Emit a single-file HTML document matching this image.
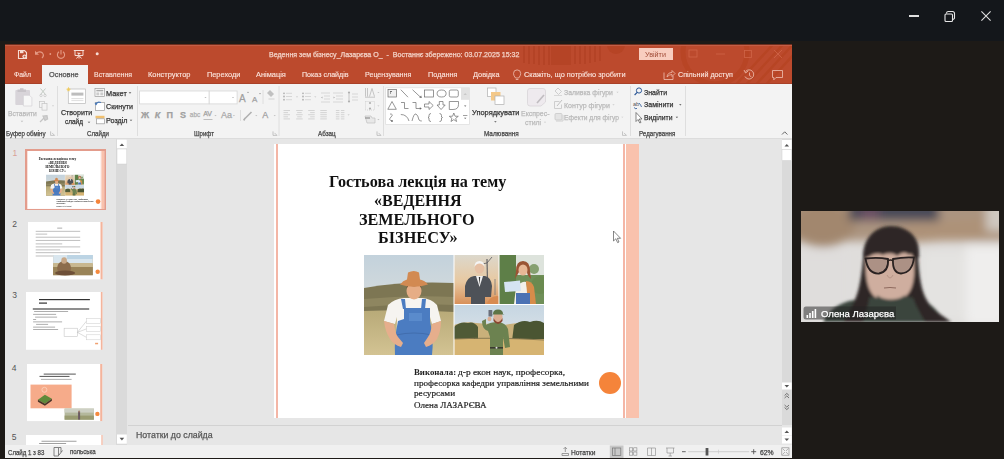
<!DOCTYPE html>
<html><head><meta charset="utf-8">
<style>
*{margin:0;padding:0;box-sizing:border-box}
html,body{width:1004px;height:459px;overflow:hidden;background:#1d1a17;font-family:"Liberation Sans",sans-serif;position:relative}
.a{position:absolute;white-space:nowrap;line-height:normal}
div.a{-webkit-text-stroke:0.25px currentColor}
svg.a{overflow:visible}
</style></head><body>
<div class="a" style="left:0;top:0;width:1004px;height:41px;background:#14171b"></div>
<div class="a" style="left:908.8px;top:15.3px;width:10px;height:1.4px;background:#e0e0e0"></div>
<svg class="a" style="left:943px;top:9.5px" width="13" height="13" viewBox="0 0 13 13"><rect x="2" y="4" width="7.5" height="7.5" rx="1" fill="none" stroke="#e6e6e6" stroke-width="1.1"/><path d="M3.5 3.5V3A1.8 1.8 0 0 1 5.3 1.5H9.7A1.8 1.8 0 0 1 11.5 3.3V7.7A1.8 1.8 0 0 1 9.7 9.5H9.5" fill="none" stroke="#e6e6e6" stroke-width="1.1"/></svg>
<svg class="a" style="left:981px;top:11px" width="10" height="10" viewBox="0 0 10 10"><path d="M0.4 0.4L9.6 9.6M9.6 0.4L0.4 9.6" stroke="#e0e0e0" stroke-width="1.1"/></svg>
<div class="a" style="left:5px;top:44px;width:787px;height:40px;background:#bc4a2d"></div>
<svg class="a" style="left:520px;top:44px;overflow:hidden" width="272" height="39" viewBox="0 0 272 39">
<g fill="none" stroke="#ad3e20" stroke-width="2" opacity="0.55">
<path d="M4 0V19M9 0V20M14 0V20M19 0V21M24 0V21M29 0V21M55 0V20M60 0V20M65 0V20M70 0V19M75 0V18M80 0V17"/>
</g>
<rect x="31" y="0" width="20" height="21" fill="#ad3e20" opacity="0.45"/>
<circle cx="96" cy="1" r="9" fill="#b0401f" opacity="0.55"/>
<circle cx="195" cy="8" r="32" fill="none" stroke="#b4421f" stroke-width="5" opacity="0.55"/>
<g stroke="#b4421f" stroke-width="2.5" opacity="0.6"><path d="M222 45L268 -5M232 45L278 -5M242 45L288 -5M212 45L258 -5"/></g>
</svg>
<div class="a" style="left:5px;top:83px;width:787px;height:1px;background:#a94129"></div>
<div class="a" style="left:5px;top:84px;width:787px;height:54px;background:#f3f3f3"></div>
<div class="a" style="left:5px;top:44px;width:787px;height:1px;background:#6e2e1e"></div>
<div class="a" style="left:5px;top:45px;width:787px;height:1px;background:#c45e45"></div>
<div class="a" style="left:5px;top:138px;width:787px;height:1px;background:#dcdcdc"></div>
<div class="a" style="left:5px;top:139px;width:787px;height:306px;background:#e6e6e6"></div>
<div class="a" style="left:42px;top:64.5px;width:45.5px;height:19.5px;background:#f3f3f3"></div>
<svg class="a" style="left:0;top:0" width="1004" height="459" viewBox="0 0 1004 459"><path d="M57.5 86V136" stroke="#dedede" stroke-width="1"/><path d="M137.5 86V136" stroke="#dedede" stroke-width="1"/><path d="M279 86V136" stroke="#dedede" stroke-width="1"/><path d="M383.5 86V136" stroke="#dedede" stroke-width="1"/><path d="M630.5 86V136" stroke="#dedede" stroke-width="1"/><path d="M685.5 86V136" stroke="#dedede" stroke-width="1"/><path d="M263 90V104" stroke="#dedede" stroke-width="1"/><path d="M240.5 110V121" stroke="#dedede" stroke-width="1"/><path d="M50.6 131.4V135.4H54.6 M52.1 132.9L54.6 135.4" stroke="#b0b0b0" stroke-width="0.7" fill="none"/><path d="M273 131.4V135.4H277 M274.5 132.9L277 135.4" stroke="#b0b0b0" stroke-width="0.7" fill="none"/><path d="M377 131.4V135.4H381 M378.5 132.9L381 135.4" stroke="#b0b0b0" stroke-width="0.7" fill="none"/><path d="M622.5 131.4V135.4H626.5 M624.0 132.9L626.5 135.4" stroke="#b0b0b0" stroke-width="0.7" fill="none"/><rect x="15.3" y="90.1" width="14.7" height="15" rx="1" fill="#d8d4d9"/><path d="M17.5 92 H26 V89.5 H23.5 V88.3 H20 V89.5 H17.5 Z" fill="#c8c4c9"/><path d="M23.4 95.3 H29.5 L31.9 97.7 V106 H23.4 Z" fill="#f7f7f7" stroke="#d0ccd1" stroke-width="0.6"/><path d="M20.7 120.85 L23.3 120.85 L22 122.15 Z" fill="#c0c0c0"/><path d="M40.5 88.5 L45.5 94.5 M45.5 88.5 L40.5 94.5" stroke="#b8c0b8" stroke-width="0.8"/><circle cx="41" cy="95.5" r="1.2" fill="none" stroke="#c4c4c4" stroke-width="0.7"/><circle cx="45" cy="95.5" r="1.2" fill="none" stroke="#c4c4c4" stroke-width="0.7"/><rect x="39.6" y="101.4" width="5" height="6" fill="none" stroke="#c4c4c4" stroke-width="0.7"/><rect x="42" y="103.6" width="5" height="6.5" fill="#f3f3f3" stroke="#c4c4c4" stroke-width="0.7"/><path d="M51.8 105.4 L54.2 105.4 L53 106.6 Z" fill="#c4c4c4"/><path d="M40 122 L44 118 M43 116 L47 115.6 L47.6 119 L45 120.5 Z" stroke="#c4c4c4" stroke-width="1.2" fill="#d0d0d0"/><rect x="68.3" y="89" width="17.3" height="14.5" fill="#fff" stroke="#b8b8b8" stroke-width="0.7"/><rect x="71.4" y="92.6" width="12" height="3" fill="#bdbdbd"/><path d="M71.4 98.6 H83.4 M71.4 100.6 H83.4" stroke="#d0d0d0" stroke-width="0.7"/><path d="M68.5 86.8 L69.3 88.5 L71 88.9 L69.5 89.9 L69.8 91.6 L68.5 90.7 L67.2 91.6 L67.5 89.9 L66 88.9 L67.7 88.5 Z" fill="#f2c94c" opacity="0.85"/><path d="M87.7 121.64999999999999 L90.3 121.64999999999999 L89 122.95 Z" fill="#555"/><rect x="95" y="88.5" width="9.5" height="8" fill="#fff" stroke="#9a9a9a" stroke-width="0.7"/><rect x="96.3" y="89.8" width="7" height="1.6" fill="#aaa"/><rect x="96.3" y="92.4" width="3" height="3" fill="#ccc"/><rect x="100.3" y="92.4" width="3" height="3" fill="#ccc"/><path d="M128.7 92.35 L131.3 92.35 L130 93.65 Z" fill="#555"/><rect x="95.5" y="102.5" width="9" height="8" fill="#fff" stroke="#9a9a9a" stroke-width="0.7"/><path d="M95.5 104.5 Q97 101 101 102.5" stroke="#4a7ab8" stroke-width="1.2" fill="none"/><path d="M94.5 102.8 L96 105.6 L97.6 103.2 Z" fill="#4a7ab8"/><rect x="95.5" y="115.8" width="9" height="2.6" fill="#f0c070"/><rect x="96.5" y="118.8" width="8" height="5" fill="#fff" stroke="#9a9a9a" stroke-width="0.7"/><path d="M129.7 119.75 L132.3 119.75 L131 121.05000000000001 Z" fill="#555"/><rect x="139.6" y="91" width="69.6" height="12.9" fill="#fff" stroke="#d6d6d6" stroke-width="0.8"/><rect x="209.2" y="91" width="27.9" height="12.9" fill="#fff" stroke="#d6d6d6" stroke-width="0.8"/><path d="M204.4 96.95 L206.6 96.95 L205.5 98.05 Z" fill="#b0b0b0"/><path d="M231.9 96.95 L234.1 96.95 L233 98.05 Z" fill="#b0b0b0"/></svg>
<svg class="a" style="left:0;top:0" width="1004" height="459" viewBox="0 0 1004 459"><path d="M247 93 l1 -1.5 l1 1.5 Z M259 93 l1 1.5 l1 -1.5 Z" fill="#a0a0a0"/><path d="M270 90 l4 4 l-3 3 l-4 -4 Z" fill="#c0c0c0"/><path d="M268.5 99 h6" stroke="#c8c8c8" stroke-width="0.8"/><path d="M203.5 119.5 h9" stroke="#b0b0b0" stroke-width="0.8"/><path d="M214.4 115.05 L216.6 115.05 L215.5 116.14999999999999 Z" fill="#c0c0c0"/><path d="M232.8 115.05 L235.0 115.05 L233.9 116.14999999999999 Z" fill="#c0c0c0"/><path d="M255.20000000000002 115.05 L257.40000000000003 115.05 L256.3 116.14999999999999 Z" fill="#c0c0c0"/><path d="M273.59999999999997 115.05 L275.8 115.05 L274.7 116.14999999999999 Z" fill="#c0c0c0"/><path d="M243.5 120 L251.5 112 M245 118 l-1 2.5" stroke="#b0b0b0" stroke-width="1.6"/><circle cx="284" cy="93.3" r="0.9" fill="#b0b0b0"/><path d="M286 93.3H292" stroke="#cfcfcf" stroke-width="0.8"/><circle cx="284" cy="96.5" r="0.9" fill="#b0b0b0"/><path d="M286 96.5H292" stroke="#cfcfcf" stroke-width="0.8"/><circle cx="284" cy="99.7" r="0.9" fill="#b0b0b0"/><path d="M286 99.7H292" stroke="#cfcfcf" stroke-width="0.8"/><path d="M295.9 96.45 L298.1 96.45 L297 97.55 Z" fill="#c0c0c0"/><circle cx="303" cy="93.3" r="0.9" fill="#b0b0b0"/><path d="M305 93.3H311" stroke="#cfcfcf" stroke-width="0.8"/><circle cx="303" cy="96.5" r="0.9" fill="#b0b0b0"/><path d="M305 96.5H311" stroke="#cfcfcf" stroke-width="0.8"/><circle cx="303" cy="99.7" r="0.9" fill="#b0b0b0"/><path d="M305 99.7H311" stroke="#cfcfcf" stroke-width="0.8"/><path d="M314.2 96.45 L316.40000000000003 96.45 L315.3 97.55 Z" fill="#c0c0c0"/><path d="M321 93h9M324 96h6M324 99h6M321 102h9" stroke="#cfcfcf" stroke-width="0.8"/><path d="M322.5 96.5 l-1.5 1 l1.5 1z" fill="#b0b0b0"/><path d="M333 93h10M336 96h7M336 99h7M333 102h10" stroke="#cfcfcf" stroke-width="0.8"/><path d="M333.5 96.5 l1.5 1 l-1.5 1z" fill="#b0b0b0"/><path d="M349 92v10" stroke="#b8b8b8" stroke-width="0.8"/><circle cx="349" cy="92.5" r="1.1" fill="#b0b0b0"/><circle cx="349" cy="101.5" r="1.1" fill="#b0b0b0"/><path d="M352 94h6M352 97h6M352 100h6" stroke="#cfcfcf" stroke-width="0.8"/><path d="M283.5 110.5h6.5" stroke="#cbcbcb" stroke-width="0.8"/><path d="M283.5 112.6h4.5" stroke="#cbcbcb" stroke-width="0.8"/><path d="M283.5 114.7h6.5" stroke="#cbcbcb" stroke-width="0.8"/><path d="M283.5 116.8h4.5" stroke="#cbcbcb" stroke-width="0.8"/><path d="M283.5 118.9h6.5" stroke="#cbcbcb" stroke-width="0.8"/><path d="M296.2 110.5h6.5" stroke="#cbcbcb" stroke-width="0.8"/><path d="M297.2 112.6h4.5" stroke="#cbcbcb" stroke-width="0.8"/><path d="M296.2 114.7h6.5" stroke="#cbcbcb" stroke-width="0.8"/><path d="M297.2 116.8h4.5" stroke="#cbcbcb" stroke-width="0.8"/><path d="M296.2 118.9h6.5" stroke="#cbcbcb" stroke-width="0.8"/><path d="M308.2 110.5h6.5" stroke="#cbcbcb" stroke-width="0.8"/><path d="M310.2 112.6h4.5" stroke="#cbcbcb" stroke-width="0.8"/><path d="M308.2 114.7h6.5" stroke="#cbcbcb" stroke-width="0.8"/><path d="M310.2 116.8h4.5" stroke="#cbcbcb" stroke-width="0.8"/><path d="M308.2 118.9h6.5" stroke="#cbcbcb" stroke-width="0.8"/><path d="M320.3 110.5h6.5" stroke="#cbcbcb" stroke-width="0.8"/><path d="M320.3 112.6h6.5" stroke="#cbcbcb" stroke-width="0.8"/><path d="M320.3 114.7h6.5" stroke="#cbcbcb" stroke-width="0.8"/><path d="M320.3 116.8h6.5" stroke="#cbcbcb" stroke-width="0.8"/><path d="M320.3 118.9h6.5" stroke="#cbcbcb" stroke-width="0.8"/><path d="M335.9 110.5h3.5M340.9 110.5h3.5" stroke="#cbcbcb" stroke-width="0.8"/><path d="M335.9 112.6h3.5M340.9 112.6h3.5" stroke="#cbcbcb" stroke-width="0.8"/><path d="M335.9 114.7h3.5M340.9 114.7h3.5" stroke="#cbcbcb" stroke-width="0.8"/><path d="M335.9 116.8h3.5M340.9 116.8h3.5" stroke="#cbcbcb" stroke-width="0.8"/><path d="M335.9 118.9h3.5M340.9 118.9h3.5" stroke="#cbcbcb" stroke-width="0.8"/><path d="M347.5 114.45 L349.70000000000005 114.45 L348.6 115.55 Z" fill="#c0c0c0"/><path d="M365.5 88v8.5M367.5 88v8.5M369.5 96.5 l2.5 -8 l2.5 8M365 97.2h10" stroke="#b0b0b0" stroke-width="0.7" fill="none"/><rect x="365.5" y="101.5" width="9" height="8.5" fill="none" stroke="#c0c0c0" stroke-width="0.6" stroke-dasharray="1 1"/><circle cx="370" cy="103" r="1.1" fill="#b0b0b0"/><circle cx="370" cy="108.6" r="1.1" fill="#b0b0b0"/><path d="M365 116h6l1 2h3v5h-8z" fill="#e8e8e8" stroke="#b8b8b8" stroke-width="0.6"/><path d="M365 118h5" stroke="#a0a0a0" stroke-width="1.5"/><path d="M377.29999999999995 91.95 L379.5 91.95 L378.4 93.05 Z" fill="#c0c0c0"/><path d="M377.29999999999995 105.45 L379.5 105.45 L378.4 106.55 Z" fill="#c0c0c0"/><path d="M377.29999999999995 119.05 L379.5 119.05 L378.4 120.14999999999999 Z" fill="#c0c0c0"/><rect x="385.7" y="87.8" width="83.8" height="36.8" fill="#fff" stroke="#dcdcdc" stroke-width="0.7"/><rect x="461" y="87.8" width="8.5" height="12" fill="#e2e2e2"/><path d="M463.5 95 l1.7 -2 l1.7 2z" fill="#c8c8c8"/><path d="M464.0 105.60000000000001 L466.4 105.60000000000001 L465.2 106.8 Z" fill="#606060"/><path d="M463 115.5h4.4" stroke="#606060" stroke-width="0.6"/><path d="M464.0 117.7 L466.4 117.7 L465.2 118.89999999999999 Z" fill="#606060"/><rect x="388" y="89.5" width="8.5" height="7.5" fill="#f0f0f0" stroke="#6a6a6a" stroke-width="0.7"/><path d="M390 91.5h2" stroke="#6a6a6a" stroke-width="0.9"/><path d="M390.5 91v3" stroke="#6a6a6a" stroke-width="0.6"/><path d="M400.8 89.7 L408 97.2" stroke="#6a6a6a" stroke-width="0.7"/><path d="M412.5 89.7 L420.5 97.2" stroke="#6a6a6a" stroke-width="0.7"/><path d="M421.8 98 l-2.6 -0.4 l2 -2z" fill="#6a6a6a"/><rect x="424.5" y="90" width="9" height="7" fill="none" stroke="#6a6a6a" stroke-width="0.7"/><ellipse cx="441.6" cy="93.5" rx="4.5" ry="3.5" fill="none" stroke="#6a6a6a" stroke-width="0.7"/><rect x="449.3" y="90" width="9" height="7" rx="1.5" fill="none" stroke="#6a6a6a" stroke-width="0.7"/><path d="M392 101.5 L396.3 109.3 H387.8 Z" fill="none" stroke="#6a6a6a" stroke-width="0.7"/><path d="M401 102.5 H404.5 V108.5 H408.5" fill="none" stroke="#6a6a6a" stroke-width="0.7"/><path d="M412.5 102.5 H416 V108.5 H420" fill="none" stroke="#6a6a6a" stroke-width="0.7"/><path d="M421.8 108.5 l-2 -1.3 v2.6z" fill="#6a6a6a"/><path d="M424.5 104 H429 V101.5 L433.2 105.5 L429 109.5 V107 H424.5 Z" fill="none" stroke="#6a6a6a" stroke-width="0.7"/><path d="M439.3 101.5 H443 V105 H445.2 L441.1 109.5 L437 105 H439.3 Z" fill="none" stroke="#6a6a6a" stroke-width="0.7"/><path d="M449.3 109.5 V101.5 H458.5 V104.5 Q458.5 109.5 453 109.5 Z" fill="none" stroke="#6a6a6a" stroke-width="0.7"/><path d="M390 114 Q394 114 391 117 Q388 120 392 121" fill="none" stroke="#6a6a6a" stroke-width="0.7"/><circle cx="392" cy="121" r="0.9" fill="#6a6a6a"/><path d="M400.8 114.5 Q407 114.5 409 121" fill="none" stroke="#6a6a6a" stroke-width="0.7"/><path d="M412 121 Q414 113 416 114 Q418 115 419 120 Q420 121 421.8 121" fill="none" stroke="#6a6a6a" stroke-width="0.7"/><path d="M431 113.5 Q429 113.5 429 115.5 V117 L428 117.5 L429 118 V120 Q429 121.5 431 121.5" fill="none" stroke="#6a6a6a" stroke-width="0.7"/><path d="M439.5 113.5 Q441.5 113.5 441.5 115.5 V117 L442.5 117.5 L441.5 118 V120 Q441.5 121.5 439.5 121.5" fill="none" stroke="#6a6a6a" stroke-width="0.7"/><path d="M453.8 113 L455 116.2 L458.3 116.3 L455.7 118.3 L456.6 121.5 L453.8 119.6 L451 121.5 L451.9 118.3 L449.3 116.3 L452.6 116.2 Z" fill="none" stroke="#6a6a6a" stroke-width="0.7"/><rect x="487.5" y="88" width="8.5" height="8.5" fill="#fff" stroke="#b0b0b0" stroke-width="0.7"/><rect x="491" y="92" width="9.5" height="8.5" fill="#f4c98a"/><rect x="495" y="96" width="9" height="8.5" fill="#fff" stroke="#b0b0b0" stroke-width="0.7"/><path d="M494.09999999999997 121.14999999999999 L496.7 121.14999999999999 L495.4 122.45 Z" fill="#555"/><path d="M527.5 91 Q527.5 88.5 530 88.5 H543 Q545.5 88.5 545.5 91 V102 L541 106 H530 Q527.5 106 527.5 103.5 Z" fill="#eeeaee" stroke="#d8d4d8" stroke-width="0.8"/><path d="M537 103 L544 95" stroke="#c0bcc0" stroke-width="1.6"/><path d="M543.9 121.85000000000001 L546.1 121.85000000000001 L545 122.95 Z" fill="#c8c8c8"/><path d="M555 91 l3 -3 l3.5 3.5 l-3 3 z" fill="none" stroke="#c4c4c4" stroke-width="0.8"/><path d="M554 95.5h8" stroke="#d8d8d8" stroke-width="1"/><path d="M554.5 101.5 h5 M554.5 101.5 v7 h7 v-4" fill="none" stroke="#c4c4c4" stroke-width="0.8"/><path d="M557 106 L562 100" stroke="#c0c0c0" stroke-width="1"/><rect x="555" y="113.5" width="7" height="6.5" rx="1" fill="#e4e4e4" stroke="#c4c4c4" stroke-width="0.7"/><path d="M556 121 h7 v-6" stroke="#d0d0d0" stroke-width="1" fill="none"/><path d="M616.4 91.85000000000001 L618.6 91.85000000000001 L617.5 92.95 Z" fill="#cccccc"/><path d="M612.4 104.35000000000001 L614.6 104.35000000000001 L613.5 105.45 Z" fill="#cccccc"/><path d="M621.1999999999999 116.75 L623.4 116.75 L622.3 117.85 Z" fill="#cccccc"/><circle cx="639" cy="90.5" r="2.6" fill="none" stroke="#2b5797" stroke-width="1"/><path d="M637.2 92.4 L634.6 95" stroke="#2b5797" stroke-width="1.2"/><text x="633" y="105.5" font-size="5.5" font-family="Liberation Sans" fill="#555">ab</text><path d="M634 107.5 l2 1.5 l1 -1 M639 103 q2 2 2.5 4" stroke="#2b5797" stroke-width="0.8" fill="none"/><path d="M636 112.5 V121.5 L638 119.5 L639.8 123 L641 122.4 L639.3 119 L642 119 Z" fill="#fff" stroke="#555" stroke-width="0.7"/><path d="M679.0999999999999 104.30000000000001 L681.5 104.30000000000001 L680.3 105.5 Z" fill="#444"/><path d="M675.6999999999999 116.7 L678.1 116.7 L676.9 117.89999999999999 Z" fill="#444"/><path d="M782 134.5 L784.7 131.8 L787.4 134.5" stroke="#555" stroke-width="0.9" fill="none"/></svg>
<svg class="a" style="left:0;top:0" width="1004" height="459" viewBox="0 0 1004 459"><path d="M18.5 50.5 H24.5 L26.5 52.5 V58.5 H18.5 Z" fill="none" stroke="#f6dcd3" stroke-width="1.1"/><rect x="20" y="51" width="3.5" height="2.2" fill="#f6dcd3"/><circle cx="24.6" cy="56.6" r="2.2" fill="#f6dcd3"/><path d="M23.6 56.6 h2 M24.6 55.6 v2" stroke="#ba4a2e" stroke-width="0.7"/><path d="M36 53.5 Q39.5 50.5 42.5 53 Q44.5 55.5 42 58" fill="none" stroke="#e59a84" stroke-width="1.2"/><path d="M35 50.8 V54.8 H39 Z" fill="#e59a84"/><circle cx="50.3" cy="54" r="0.9" fill="#e59a84"/><path d="M59 51.8 A3.6 3.6 0 1 0 63 51.8" fill="none" stroke="#e59a84" stroke-width="1.1"/><path d="M61 50 V54.5" stroke="#e59a84" stroke-width="1.1"/><path d="M73.8 50.5 H84.2 M75 50.5 V55.5 H83 V50.5 M79 55.5 V58.5 M76.5 58.5 L79 55.5 L81.5 58.5" fill="none" stroke="#f6dcd3" stroke-width="1"/><path d="M77 52.5 L81 53 L78.5 55" fill="#f6dcd3"/><circle cx="97.2" cy="53.8" r="1.5" fill="#f6dcd3"/><path d="M716 54 h9" stroke="#cf6448" stroke-width="0.8"/><rect x="744.5" y="50.5" width="7" height="7" fill="none" stroke="#cf6448" stroke-width="0.8"/><path d="M774 50 L782 58 M782 50 L774 58" stroke="#cf6448" stroke-width="0.8"/><rect x="689" y="50" width="8" height="7" fill="none" stroke="#cf6448" stroke-width="0.8"/><path d="M515.5 78 Q513.5 75.5 513.5 73.5 A3.6 3.6 0 0 1 520.7 73.5 Q520.7 75.5 518.7 78 Z" fill="none" stroke="#f0c2b4" stroke-width="0.8"/><path d="M515.8 79.5 h2.6" stroke="#f0c2b4" stroke-width="0.8"/><path d="M664 72.5 V79.5 H673 V76" fill="none" stroke="#f0c2b4" stroke-width="0.8"/><path d="M667 77 Q667.5 72.5 672 72.5 V70.5 L675 73.5 L672 76.5 V74.5 Q669 74.5 667 77 Z" fill="none" stroke="#f0c2b4" stroke-width="0.75"/><path d="M745.6 71.5 A4.6 4.6 0 1 1 745 76.5" fill="none" stroke="#f0c2b4" stroke-width="0.8"/><path d="M744 70 L745.6 73 L748.2 71" fill="none" stroke="#f0c2b4" stroke-width="0.8"/><path d="M749.5 72.5 V75.5 L751.5 77" fill="none" stroke="#f0c2b4" stroke-width="0.8"/><path d="M772.5 70.5 H782.5 V77.5 H776 L773.8 79.8 V77.5 H772.5 Z" fill="none" stroke="#f0c2b4" stroke-width="0.8"/></svg>
<div class="a" style="left:239px;top:93.5px;font-size:10px;font-weight:400;color:#a0a0a0;line-height:1;">A</div>
<div class="a" style="left:252px;top:95.5px;font-size:8px;font-weight:400;color:#a0a0a0;line-height:1;">A</div>
<div class="a" style="left:141px;top:110.5px;font-size:9px;font-weight:700;color:#a0a0a0;line-height:1;">Ж</div>
<div class="a" style="left:154.7px;top:110.5px;font-size:9px;font-weight:700;color:#a0a0a0;line-height:1;font-style:italic">К</div>
<div class="a" style="left:166.6px;top:110.5px;font-size:9px;font-weight:700;color:#a0a0a0;line-height:1;">П</div>
<div class="a" style="left:180px;top:110.5px;font-size:9px;font-weight:700;color:#a0a0a0;line-height:1;">S</div>
<div class="a" style="left:189.8px;top:112.3px;font-size:6.5px;font-weight:400;color:#b0b0b0;line-height:1;">abc</div>
<div class="a" style="left:203.2px;top:110.3px;font-size:7px;font-weight:400;color:#a0a0a0;line-height:1;">AV</div>
<div class="a" style="left:220.9px;top:110.5px;font-size:9px;font-weight:400;color:#a8a8a8;line-height:1;">Aa</div>
<div class="a" style="left:262.3px;top:110.5px;font-size:9px;font-weight:400;color:#a0a0a0;line-height:1;">A</div>
<div class="a" style="left:269.00px;top:50.02px;font-family:'Liberation Sans',sans-serif;font-size:7.8px;font-weight:400;color:#f3d3c8;transform:scaleX(0.9040);transform-origin:0 0;white-space:pre">Ведення зем бізнесу_Лазарєва О_  -  Востаннє збережено: 03.07.2025 15:32</div>
<div class="a" style="left:639px;top:48px;width:34px;height:12px;background:#f8cdbf"></div>
<div class="a" style="left:645.20px;top:49.72px;font-family:'Liberation Sans',sans-serif;font-size:7.8px;font-weight:400;color:#a04a36;transform:scaleX(0.9218);transform-origin:0 0;-webkit-text-stroke:0">Увійти</div>
<div class="a" style="left:14.40px;top:70.23px;font-family:'Liberation Sans',sans-serif;font-size:7.6px;font-weight:400;color:#fbe5de;transform:scaleX(0.9105);transform-origin:0 0;-webkit-text-stroke:0.12px currentColor">Файл</div>
<div class="a" style="left:94.30px;top:70.23px;font-family:'Liberation Sans',sans-serif;font-size:7.6px;font-weight:400;color:#fbe5de;transform:scaleX(0.9157);transform-origin:0 0;-webkit-text-stroke:0.12px currentColor">Вставлення</div>
<div class="a" style="left:148.00px;top:70.23px;font-family:'Liberation Sans',sans-serif;font-size:7.6px;font-weight:400;color:#fbe5de;transform:scaleX(0.9812);transform-origin:0 0;-webkit-text-stroke:0.12px currentColor">Конструктор</div>
<div class="a" style="left:206.70px;top:70.23px;font-family:'Liberation Sans',sans-serif;font-size:7.6px;font-weight:400;color:#fbe5de;transform:scaleX(0.9678);transform-origin:0 0;-webkit-text-stroke:0.12px currentColor">Переходи</div>
<div class="a" style="left:255.70px;top:70.23px;font-family:'Liberation Sans',sans-serif;font-size:7.6px;font-weight:400;color:#fbe5de;transform:scaleX(0.9788);transform-origin:0 0;-webkit-text-stroke:0.12px currentColor">Анімація</div>
<div class="a" style="left:301.70px;top:70.23px;font-family:'Liberation Sans',sans-serif;font-size:7.6px;font-weight:400;color:#fbe5de;transform:scaleX(0.9367);transform-origin:0 0;-webkit-text-stroke:0.12px currentColor">Показ слайдів</div>
<div class="a" style="left:364.50px;top:70.23px;font-family:'Liberation Sans',sans-serif;font-size:7.6px;font-weight:400;color:#fbe5de;transform:scaleX(0.9354);transform-origin:0 0;-webkit-text-stroke:0.12px currentColor">Рецензування</div>
<div class="a" style="left:427.50px;top:70.23px;font-family:'Liberation Sans',sans-serif;font-size:7.6px;font-weight:400;color:#fbe5de;transform:scaleX(0.9618);transform-origin:0 0;-webkit-text-stroke:0.12px currentColor">Подання</div>
<div class="a" style="left:473.00px;top:70.23px;font-family:'Liberation Sans',sans-serif;font-size:7.6px;font-weight:400;color:#fbe5de;transform:scaleX(0.9697);transform-origin:0 0;-webkit-text-stroke:0.12px currentColor">Довідка</div>
<div class="a" style="left:523.70px;top:70.23px;font-family:'Liberation Sans',sans-serif;font-size:7.6px;font-weight:400;color:#fbe5de;transform:scaleX(0.9695);transform-origin:0 0;-webkit-text-stroke:0.12px currentColor">Скажіть, що потрібно зробити</div>
<div class="a" style="left:678.40px;top:70.23px;font-family:'Liberation Sans',sans-serif;font-size:7.6px;font-weight:400;color:#fbe5de;transform:scaleX(0.9402);transform-origin:0 0;-webkit-text-stroke:0.12px currentColor">Спільний доступ</div>
<div class="a" style="left:49.40px;top:70.23px;font-family:'Liberation Sans',sans-serif;font-size:7.6px;font-weight:400;color:#505050;transform:scaleX(0.9680);transform-origin:0 0;">Основне</div>
<div class="a" style="left:6.20px;top:129.26px;font-family:'Liberation Sans',sans-serif;font-size:7.2px;font-weight:400;color:#444;transform:scaleX(0.8600);transform-origin:0 0;">Буфер обміну</div>
<div class="a" style="left:87.10px;top:129.26px;font-family:'Liberation Sans',sans-serif;font-size:7.2px;font-weight:400;color:#444;transform:scaleX(0.8552);transform-origin:0 0;">Слайди</div>
<div class="a" style="left:194.00px;top:129.26px;font-family:'Liberation Sans',sans-serif;font-size:7.2px;font-weight:400;color:#444;transform:scaleX(0.8454);transform-origin:0 0;">Шрифт</div>
<div class="a" style="left:318.20px;top:129.26px;font-family:'Liberation Sans',sans-serif;font-size:7.2px;font-weight:400;color:#444;transform:scaleX(0.8775);transform-origin:0 0;">Абзац</div>
<div class="a" style="left:484.10px;top:129.26px;font-family:'Liberation Sans',sans-serif;font-size:7.2px;font-weight:400;color:#444;transform:scaleX(0.8848);transform-origin:0 0;">Малювання</div>
<div class="a" style="left:639.40px;top:129.26px;font-family:'Liberation Sans',sans-serif;font-size:7.2px;font-weight:400;color:#444;transform:scaleX(0.8582);transform-origin:0 0;">Редагування</div>
<div class="a" style="left:7.70px;top:108.93px;font-family:'Liberation Sans',sans-serif;font-size:7.6px;font-weight:400;color:#b9b9b9;transform:scaleX(0.8866);transform-origin:0 0;">Вставити</div>
<div class="a" style="left:60.90px;top:108.11px;font-family:'Liberation Sans',sans-serif;font-size:7.8px;font-weight:400;color:#333;transform:scaleX(0.9089);transform-origin:0 0;">Створити</div>
<div class="a" style="left:65.00px;top:117.17px;font-family:'Liberation Sans',sans-serif;font-size:7.8px;font-weight:400;color:#333;transform:scaleX(0.8294);transform-origin:0 0;">слайд</div>
<div class="a" style="left:106.00px;top:88.52px;font-family:'Liberation Sans',sans-serif;font-size:7.8px;font-weight:400;color:#333;transform:scaleX(0.9421);transform-origin:0 0;">Макет</div>
<div class="a" style="left:106.00px;top:101.72px;font-family:'Liberation Sans',sans-serif;font-size:7.8px;font-weight:400;color:#333;transform:scaleX(0.9143);transform-origin:0 0;">Скинути</div>
<div class="a" style="left:106.00px;top:115.92px;font-family:'Liberation Sans',sans-serif;font-size:7.8px;font-weight:400;color:#333;transform:scaleX(0.9210);transform-origin:0 0;">Розділ</div>
<div class="a" style="left:472.00px;top:108.42px;font-family:'Liberation Sans',sans-serif;font-size:7.8px;font-weight:400;color:#333;transform:scaleX(0.9551);transform-origin:0 0;">Упорядкувати</div>
<div class="a" style="left:520.90px;top:108.53px;font-family:'Liberation Sans',sans-serif;font-size:7.6px;font-weight:400;color:#b9b9b9;transform:scaleX(0.9147);transform-origin:0 0;">Експрес-</div>
<div class="a" style="left:524.90px;top:117.50px;font-family:'Liberation Sans',sans-serif;font-size:7.6px;font-weight:400;color:#b9b9b9;transform:scaleX(0.9127);transform-origin:0 0;">стилі</div>
<div class="a" style="left:564.10px;top:88.03px;font-family:'Liberation Sans',sans-serif;font-size:7.6px;font-weight:400;color:#b9b9b9;transform:scaleX(0.9016);transform-origin:0 0;">Заливка фігури</div>
<div class="a" style="left:564.10px;top:100.53px;font-family:'Liberation Sans',sans-serif;font-size:7.6px;font-weight:400;color:#b9b9b9;transform:scaleX(0.9302);transform-origin:0 0;">Контур фігури</div>
<div class="a" style="left:564.10px;top:112.93px;font-family:'Liberation Sans',sans-serif;font-size:7.6px;font-weight:400;color:#b9b9b9;transform:scaleX(0.8784);transform-origin:0 0;">Ефекти для фігур</div>
<div class="a" style="left:643.80px;top:87.92px;font-family:'Liberation Sans',sans-serif;font-size:7.8px;font-weight:400;color:#333;transform:scaleX(0.9009);transform-origin:0 0;">Знайти</div>
<div class="a" style="left:643.80px;top:100.42px;font-family:'Liberation Sans',sans-serif;font-size:7.8px;font-weight:400;color:#333;transform:scaleX(0.9012);transform-origin:0 0;">Замінити</div>
<div class="a" style="left:643.80px;top:112.81px;font-family:'Liberation Sans',sans-serif;font-size:7.8px;font-weight:400;color:#333;transform:scaleX(0.8723);transform-origin:0 0;">Виділити</div>
<div class="a" style="left:116px;top:139px;width:11px;height:306px;background:#dadada"></div>
<div class="a" style="left:782px;top:139px;width:10px;height:286px;background:#dadada"></div>
<div class="a" style="left:274px;top:144px;width:365px;height:274px"><div class="a" style="left:0;top:0;width:365px;height:274px;background:#fff"></div>
<div class="a" style="left:1.5px;top:0;width:2.5px;height:274px;background:#f4b6a6"></div>
<div class="a" style="left:348.5px;top:0;width:2px;height:274px;background:#f4b6a6"></div>
<div class="a" style="left:352px;top:0;width:13px;height:274px;background:#f9c2ad"></div>
<div class="a" style="left:55.00px;top:29.04px;font-family:'Liberation Serif',serif;font-size:16px;font-weight:700;-webkit-text-stroke:0;color:#111;transform:scaleX(1.0123);transform-origin:0 0;">Гостьова лекція на тему</div>
<div class="a" style="left:99.80px;top:47.54px;font-family:'Liberation Serif',serif;font-size:16px;font-weight:700;-webkit-text-stroke:0;color:#111;transform:scaleX(1.0015);transform-origin:0 0;">«ВЕДЕННЯ</div>
<div class="a" style="left:84.80px;top:66.54px;font-family:'Liberation Serif',serif;font-size:16px;font-weight:700;-webkit-text-stroke:0;color:#111;transform:scaleX(1.0114);transform-origin:0 0;">ЗЕМЕЛЬНОГО</div>
<div class="a" style="left:103.80px;top:85.44px;font-family:'Liberation Serif',serif;font-size:16px;font-weight:700;-webkit-text-stroke:0;color:#111;transform:scaleX(1.0159);transform-origin:0 0;">БІЗНЕСУ»</div>
<div class="a" style="left:139.90px;top:222.69px;font-family:'Liberation Serif',serif;font-size:9.1px;font-weight:700;-webkit-text-stroke:0;color:#222;transform:scaleX(0.9675);transform-origin:0 0;">Виконала:</div>
<div class="a" style="left:184.00px;top:222.69px;font-family:'Liberation Serif',serif;font-size:9.1px;font-weight:400;-webkit-text-stroke:0;color:#222;transform:scaleX(1.0293);transform-origin:0 0;-webkit-text-stroke:0.2px #222">д-р екон наук, професорка,</div>
<div class="a" style="left:139.90px;top:234.49px;font-family:'Liberation Serif',serif;font-size:9.1px;font-weight:400;-webkit-text-stroke:0;color:#222;transform:scaleX(1.0048);transform-origin:0 0;-webkit-text-stroke:0.2px #222">професорка кафедри управління земельними</div>
<div class="a" style="left:139.90px;top:244.09px;font-family:'Liberation Serif',serif;font-size:9.1px;font-weight:400;-webkit-text-stroke:0;color:#222;transform:scaleX(1.0117);transform-origin:0 0;-webkit-text-stroke:0.2px #222">ресурсами</div>
<div class="a" style="left:139.90px;top:255.69px;font-family:'Liberation Serif',serif;font-size:9.1px;font-weight:400;-webkit-text-stroke:0;color:#222;transform:scaleX(0.9935);transform-origin:0 0;-webkit-text-stroke:0.2px #222">Олена ЛАЗАРЄВА</div>
<svg class="a" style="left:90px;top:111px;overflow:hidden" width="180" height="100" viewBox="0 0 180 100">
<defs>
<linearGradient id="sky1_2" x1="0" y1="0" x2="0" y2="1"><stop offset="0" stop-color="#c3d2dc"/><stop offset="1" stop-color="#e9e5dc"/></linearGradient>
<linearGradient id="sky2_2" x1="0" y1="0" x2="0" y2="1"><stop offset="0" stop-color="#dcd8cc"/><stop offset="0.55" stop-color="#e8c8a0"/><stop offset="1" stop-color="#d8915a"/></linearGradient>
<linearGradient id="sky4_2" x1="0" y1="0" x2="0" y2="1"><stop offset="0" stop-color="#c6d6e2"/><stop offset="1" stop-color="#e4e8ea"/></linearGradient>
<linearGradient id="fld_2" x1="0" y1="0" x2="0" y2="1"><stop offset="0" stop-color="#b8aa78"/><stop offset="1" stop-color="#d3c393"/></linearGradient>
</defs>
<!-- panel 1 farmer -->
<rect x="0" y="0" width="90" height="100" fill="url(#sky1_2)"/>
<path d="M0 33 Q40 26 90 28 L90 100 L0 100 Z" fill="#7d7653"/>
<path d="M0 44 Q45 40 90 42 L90 50 Q45 48 0 52 Z" fill="#8e8660"/>
<path d="M0 56 Q45 54 90 57 L90 100 L0 100 Z" fill="url(#fld_2)"/>
<!-- farmer -->
<path d="M24 50 Q30 44 40 43 L58 43 Q68 44 73 50 L77 66 L68 69 L66 62 L67 100 L32 100 L33 62 L31 69 L20 66 Z" fill="#f6f4f0"/>
<path d="M40 53 L66 53 L66 66 Q70 84 68 100 L31 100 Q30 84 34 66 L40 64 Z" fill="#4b7cc1"/>
<path d="M37 44 L41 44 L42 54 L39 54 Z M58 44 L62 44 L61 54 L57 54 Z" fill="#4b7cc1"/>
<rect x="45" y="58" width="13" height="8" fill="#5a8bcc"/>
<path d="M32 80 Q50 76 68 80" stroke="#3f6aa8" stroke-width="0.8" fill="none"/>
<path d="M20 66 L30 69 Q31 78 34 82 L39 88 L37 92 Q30 90 26 84 Q21 76 20 66 Z" fill="#e6ae8c"/>
<path d="M77 66 L68 69 Q67 78 64 82 L60 88 L62 92 Q69 90 73 84 Q77 76 77 66 Z" fill="#e6ae8c"/>
<ellipse cx="50" cy="36" rx="7.5" ry="8.5" fill="#e6ad86"/>
<path d="M42.5 34 Q43 27 50 27 Q57 27 57.5 34 L56 30.5 Q50 32 44 30.5 Z" fill="#4a3022"/>
<path d="M36 29.5 Q50 34 64 29.5 Q61 25.5 56 24.5 L55 17.5 Q50 14.5 44 17.5 L43 24.5 Q39 25.5 36 29.5 Z" fill="#d28a52"/>
<!-- panel 2 businessman -->
<rect x="90" y="0" width="45" height="49" fill="url(#sky2_2)"/>
<ellipse cx="133" cy="50" rx="10" ry="9" fill="#d88a50"/>
<path d="M123 4 L123.5 30" stroke="#5a5a5e" stroke-width="1.1"/>
<path d="M118 9 L123 8 L128 2" stroke="#5a5a5e" stroke-width="0.8" fill="none"/>
<path d="M131 24 L131 40" stroke="#777" stroke-width="0.8"/>
<path d="M101 31 Q103 22 110 21 L121 21 Q127 22 128 31 L127 42 L121 42 L121 49 L107 49 L107 42 L101 42 Z" fill="#4e5258"/>
<path d="M112 21 L115.5 32 L119 21 Z" fill="#f0f0f0"/>
<path d="M114.8 22 L115.5 30 L116.2 22 Z" fill="#333"/>
<ellipse cx="115.5" cy="13" rx="4.8" ry="5.8" fill="#e6c0a4"/>
<path d="M110.5 12 Q110.5 6 115.5 6 Q120.5 6 120.5 12 Q119 8.5 115.5 8.5 Q112 8.5 110.5 12 Z" fill="#f4f4f4"/>
<clipPath id="cp3_2"><rect x="135" y="0" width="45" height="49"/></clipPath>
<g clip-path="url(#cp3_2)">
<!-- panel 3 woman -->
<rect x="135" y="0" width="45" height="49" fill="#6f8f58"/>
<rect x="152" y="0" width="28" height="20" fill="#dde3dc"/>
<path d="M135 0 H152 V49 H135 Z" fill="#5e7f48"/>
<circle cx="176" cy="30" r="9" fill="#6a8a50"/>
<circle cx="170" cy="14" r="5" fill="#86a070"/>
<path d="M150 49 L152 32 Q158 26 162 27 L166 49 Z" fill="#f2f0ea"/>
<path d="M162 26 Q168 26 170 32 L172 49 L164 49 Z" fill="#d68c4a"/>
<rect x="152" y="38" width="14" height="11" fill="#4b72b4"/>
<path d="M152 16 Q152 6 159 6 Q166 6 166 16 L167 24 Q163 20 163 17 Q159 14 155 17 L151 24 Z" fill="#9a5434"/>
<ellipse cx="159" cy="15" rx="4.5" ry="5.5" fill="#e8b896"/>
<path d="M140 27 L156 25.5 L157 36 L141 37 Z" fill="#d5e4f2"/>
</g>
<!-- panel 4 soldier -->
<rect x="90" y="50" width="90" height="50" fill="url(#sky4_2)"/>
<path d="M90 70 Q100 66 112 68 L140 70 Q160 66 180 68 L180 86 L90 86 Z" fill="#c9b07a"/>
<path d="M90 72 Q96 66 104 68 Q110 66 114 72 L114 84 L90 84 Z" fill="#4f5a36"/>
<path d="M150 70 Q158 64 166 67 Q174 64 180 68 L180 86 L148 86 Z" fill="#4a5532"/>
<path d="M90 84 L180 84 L180 100 L90 100 Z" fill="#d6b472"/>
<path d="M90 84 Q130 82 180 85" stroke="#8a7a50" stroke-width="1" fill="none"/>
<path d="M122 70 Q126 67 134 67 Q142 68 144 74 L146 92 L141 93 L139 82 L139 100 L126 100 L126 82 L124 76 Q118 74 118 66 L122 64 Z" fill="#6c8250"/>
<rect x="126" y="92" width="13" height="1.6" fill="#3a3a30"/>
<circle cx="132.5" cy="92.8" r="1" fill="#ddd"/>
<ellipse cx="134" cy="62" rx="4.6" ry="5.2" fill="#dcae92"/>
<path d="M129.5 63 Q134 71 138.5 63 L138.5 66 Q134 72 129.5 66 Z" fill="#8a4630"/>
<path d="M129 59 Q129 54.5 134 54.5 Q139 54.5 139 59 L140.5 59.5 L128 59.5 Z" fill="#5e7446"/>
<rect x="124.5" y="55" width="3.8" height="6.5" rx="0.6" fill="#6a6f7a"/>
<ellipse cx="125.5" cy="64" rx="2" ry="2.2" fill="#dcae92"/>
<rect x="0" y="0" width="180" height="100" fill="none"/>
<path d="M90 0V100M90 49.5H180M135 0V49.5" stroke="#fff" stroke-width="1"/>
</svg>
<div class="a" style="left:324.9px;top:228px;width:22px;height:22px;border-radius:50%;background:#f5843a"></div></div>
<svg class="a" style="left:0;top:0" width="1004" height="459" viewBox="0 0 1004 459"><path d="M613.5 231 V241 L615.8 238.8 L617.6 242.6 L619 242 L617.3 238.3 L620.6 238.3 Z" fill="#fff" stroke="#555" stroke-width="0.7" stroke-linejoin="round"/></svg>
<div class="a" style="left:24.5px;top:149px;width:81px;height:60.5px;border:2px solid #e39c8c;background:#fff"></div>
<div class="a" style="left:26.5px;top:151px;width:365px;height:274px;transform:scale(0.2115);transform-origin:0 0"><div class="a" style="left:0;top:0;width:365px;height:274px;background:#fff"></div>
<div class="a" style="left:1.5px;top:0;width:2.5px;height:274px;background:#f4b6a6"></div>
<div class="a" style="left:348.5px;top:0;width:2px;height:274px;background:#f4b6a6"></div>
<div class="a" style="left:352px;top:0;width:13px;height:274px;background:#f9c2ad"></div>
<div class="a" style="left:55.00px;top:29.04px;font-family:'Liberation Serif',serif;font-size:16px;font-weight:700;-webkit-text-stroke:0;color:#111;transform:scaleX(1.0123);transform-origin:0 0;">Гостьова лекція на тему</div>
<div class="a" style="left:99.80px;top:47.54px;font-family:'Liberation Serif',serif;font-size:16px;font-weight:700;-webkit-text-stroke:0;color:#111;transform:scaleX(1.0015);transform-origin:0 0;">«ВЕДЕННЯ</div>
<div class="a" style="left:84.80px;top:66.54px;font-family:'Liberation Serif',serif;font-size:16px;font-weight:700;-webkit-text-stroke:0;color:#111;transform:scaleX(1.0114);transform-origin:0 0;">ЗЕМЕЛЬНОГО</div>
<div class="a" style="left:103.80px;top:85.44px;font-family:'Liberation Serif',serif;font-size:16px;font-weight:700;-webkit-text-stroke:0;color:#111;transform:scaleX(1.0159);transform-origin:0 0;">БІЗНЕСУ»</div>
<div class="a" style="left:139.90px;top:222.69px;font-family:'Liberation Serif',serif;font-size:9.1px;font-weight:700;-webkit-text-stroke:0;color:#222;transform:scaleX(0.9675);transform-origin:0 0;">Виконала:</div>
<div class="a" style="left:184.00px;top:222.69px;font-family:'Liberation Serif',serif;font-size:9.1px;font-weight:400;-webkit-text-stroke:0;color:#222;transform:scaleX(1.0293);transform-origin:0 0;-webkit-text-stroke:0.2px #222">д-р екон наук, професорка,</div>
<div class="a" style="left:139.90px;top:234.49px;font-family:'Liberation Serif',serif;font-size:9.1px;font-weight:400;-webkit-text-stroke:0;color:#222;transform:scaleX(1.0048);transform-origin:0 0;-webkit-text-stroke:0.2px #222">професорка кафедри управління земельними</div>
<div class="a" style="left:139.90px;top:244.09px;font-family:'Liberation Serif',serif;font-size:9.1px;font-weight:400;-webkit-text-stroke:0;color:#222;transform:scaleX(1.0117);transform-origin:0 0;-webkit-text-stroke:0.2px #222">ресурсами</div>
<div class="a" style="left:139.90px;top:255.69px;font-family:'Liberation Serif',serif;font-size:9.1px;font-weight:400;-webkit-text-stroke:0;color:#222;transform:scaleX(0.9935);transform-origin:0 0;-webkit-text-stroke:0.2px #222">Олена ЛАЗАРЄВА</div>
<svg class="a" style="left:90px;top:111px;overflow:hidden" width="180" height="100" viewBox="0 0 180 100">
<defs>
<linearGradient id="sky1_2" x1="0" y1="0" x2="0" y2="1"><stop offset="0" stop-color="#c3d2dc"/><stop offset="1" stop-color="#e9e5dc"/></linearGradient>
<linearGradient id="sky2_2" x1="0" y1="0" x2="0" y2="1"><stop offset="0" stop-color="#dcd8cc"/><stop offset="0.55" stop-color="#e8c8a0"/><stop offset="1" stop-color="#d8915a"/></linearGradient>
<linearGradient id="sky4_2" x1="0" y1="0" x2="0" y2="1"><stop offset="0" stop-color="#c6d6e2"/><stop offset="1" stop-color="#e4e8ea"/></linearGradient>
<linearGradient id="fld_2" x1="0" y1="0" x2="0" y2="1"><stop offset="0" stop-color="#b8aa78"/><stop offset="1" stop-color="#d3c393"/></linearGradient>
</defs>
<!-- panel 1 farmer -->
<rect x="0" y="0" width="90" height="100" fill="url(#sky1_2)"/>
<path d="M0 33 Q40 26 90 28 L90 100 L0 100 Z" fill="#7d7653"/>
<path d="M0 44 Q45 40 90 42 L90 50 Q45 48 0 52 Z" fill="#8e8660"/>
<path d="M0 56 Q45 54 90 57 L90 100 L0 100 Z" fill="url(#fld_2)"/>
<!-- farmer -->
<path d="M24 50 Q30 44 40 43 L58 43 Q68 44 73 50 L77 66 L68 69 L66 62 L67 100 L32 100 L33 62 L31 69 L20 66 Z" fill="#f6f4f0"/>
<path d="M40 53 L66 53 L66 66 Q70 84 68 100 L31 100 Q30 84 34 66 L40 64 Z" fill="#4b7cc1"/>
<path d="M37 44 L41 44 L42 54 L39 54 Z M58 44 L62 44 L61 54 L57 54 Z" fill="#4b7cc1"/>
<rect x="45" y="58" width="13" height="8" fill="#5a8bcc"/>
<path d="M32 80 Q50 76 68 80" stroke="#3f6aa8" stroke-width="0.8" fill="none"/>
<path d="M20 66 L30 69 Q31 78 34 82 L39 88 L37 92 Q30 90 26 84 Q21 76 20 66 Z" fill="#e6ae8c"/>
<path d="M77 66 L68 69 Q67 78 64 82 L60 88 L62 92 Q69 90 73 84 Q77 76 77 66 Z" fill="#e6ae8c"/>
<ellipse cx="50" cy="36" rx="7.5" ry="8.5" fill="#e6ad86"/>
<path d="M42.5 34 Q43 27 50 27 Q57 27 57.5 34 L56 30.5 Q50 32 44 30.5 Z" fill="#4a3022"/>
<path d="M36 29.5 Q50 34 64 29.5 Q61 25.5 56 24.5 L55 17.5 Q50 14.5 44 17.5 L43 24.5 Q39 25.5 36 29.5 Z" fill="#d28a52"/>
<!-- panel 2 businessman -->
<rect x="90" y="0" width="45" height="49" fill="url(#sky2_2)"/>
<ellipse cx="133" cy="50" rx="10" ry="9" fill="#d88a50"/>
<path d="M123 4 L123.5 30" stroke="#5a5a5e" stroke-width="1.1"/>
<path d="M118 9 L123 8 L128 2" stroke="#5a5a5e" stroke-width="0.8" fill="none"/>
<path d="M131 24 L131 40" stroke="#777" stroke-width="0.8"/>
<path d="M101 31 Q103 22 110 21 L121 21 Q127 22 128 31 L127 42 L121 42 L121 49 L107 49 L107 42 L101 42 Z" fill="#4e5258"/>
<path d="M112 21 L115.5 32 L119 21 Z" fill="#f0f0f0"/>
<path d="M114.8 22 L115.5 30 L116.2 22 Z" fill="#333"/>
<ellipse cx="115.5" cy="13" rx="4.8" ry="5.8" fill="#e6c0a4"/>
<path d="M110.5 12 Q110.5 6 115.5 6 Q120.5 6 120.5 12 Q119 8.5 115.5 8.5 Q112 8.5 110.5 12 Z" fill="#f4f4f4"/>
<clipPath id="cp3_2"><rect x="135" y="0" width="45" height="49"/></clipPath>
<g clip-path="url(#cp3_2)">
<!-- panel 3 woman -->
<rect x="135" y="0" width="45" height="49" fill="#6f8f58"/>
<rect x="152" y="0" width="28" height="20" fill="#dde3dc"/>
<path d="M135 0 H152 V49 H135 Z" fill="#5e7f48"/>
<circle cx="176" cy="30" r="9" fill="#6a8a50"/>
<circle cx="170" cy="14" r="5" fill="#86a070"/>
<path d="M150 49 L152 32 Q158 26 162 27 L166 49 Z" fill="#f2f0ea"/>
<path d="M162 26 Q168 26 170 32 L172 49 L164 49 Z" fill="#d68c4a"/>
<rect x="152" y="38" width="14" height="11" fill="#4b72b4"/>
<path d="M152 16 Q152 6 159 6 Q166 6 166 16 L167 24 Q163 20 163 17 Q159 14 155 17 L151 24 Z" fill="#9a5434"/>
<ellipse cx="159" cy="15" rx="4.5" ry="5.5" fill="#e8b896"/>
<path d="M140 27 L156 25.5 L157 36 L141 37 Z" fill="#d5e4f2"/>
</g>
<!-- panel 4 soldier -->
<rect x="90" y="50" width="90" height="50" fill="url(#sky4_2)"/>
<path d="M90 70 Q100 66 112 68 L140 70 Q160 66 180 68 L180 86 L90 86 Z" fill="#c9b07a"/>
<path d="M90 72 Q96 66 104 68 Q110 66 114 72 L114 84 L90 84 Z" fill="#4f5a36"/>
<path d="M150 70 Q158 64 166 67 Q174 64 180 68 L180 86 L148 86 Z" fill="#4a5532"/>
<path d="M90 84 L180 84 L180 100 L90 100 Z" fill="#d6b472"/>
<path d="M90 84 Q130 82 180 85" stroke="#8a7a50" stroke-width="1" fill="none"/>
<path d="M122 70 Q126 67 134 67 Q142 68 144 74 L146 92 L141 93 L139 82 L139 100 L126 100 L126 82 L124 76 Q118 74 118 66 L122 64 Z" fill="#6c8250"/>
<rect x="126" y="92" width="13" height="1.6" fill="#3a3a30"/>
<circle cx="132.5" cy="92.8" r="1" fill="#ddd"/>
<ellipse cx="134" cy="62" rx="4.6" ry="5.2" fill="#dcae92"/>
<path d="M129.5 63 Q134 71 138.5 63 L138.5 66 Q134 72 129.5 66 Z" fill="#8a4630"/>
<path d="M129 59 Q129 54.5 134 54.5 Q139 54.5 139 59 L140.5 59.5 L128 59.5 Z" fill="#5e7446"/>
<rect x="124.5" y="55" width="3.8" height="6.5" rx="0.6" fill="#6a6f7a"/>
<ellipse cx="125.5" cy="64" rx="2" ry="2.2" fill="#dcae92"/>
<rect x="0" y="0" width="180" height="100" fill="none"/>
<path d="M90 0V100M90 49.5H180M135 0V49.5" stroke="#fff" stroke-width="1"/>
</svg>
<div class="a" style="left:324.9px;top:228px;width:22px;height:22px;border-radius:50%;background:#f5843a"></div></div>
<svg class="a" style="left:27.8px;top:221.9px" width="74.6" height="57.4" viewBox="0 0 74.6 57.4"><rect width="74.6" height="57.4" fill="#fff"/><rect x="72.5" y="0" width="2.1" height="57.4" fill="#f4b49c"/><rect x="7.699999999999999" y="8.85" width="44.50" height="0.9" fill="#a0a0a0" opacity="0.75"/><rect x="7.699999999999999" y="11.65" width="11.50" height="0.9" fill="#a0a0a0" opacity="0.75"/><rect x="7.699999999999999" y="14.75" width="44.50" height="0.9" fill="#a0a0a0" opacity="0.75"/><rect x="7.699999999999999" y="17.95" width="44.50" height="0.9" fill="#a0a0a0" opacity="0.75"/><rect x="7.699999999999999" y="21.45" width="26.50" height="0.9" fill="#a0a0a0" opacity="0.75"/><rect x="7.699999999999999" y="24.45" width="44.50" height="0.9" fill="#a0a0a0" opacity="0.75"/><rect x="7.699999999999999" y="27.45" width="24.50" height="0.9" fill="#a0a0a0" opacity="0.75"/><rect x="7.699999999999999" y="30.25" width="44.50" height="0.9" fill="#a0a0a0" opacity="0.75"/><rect x="7.699999999999999" y="33.55" width="24.50" height="0.9" fill="#a0a0a0" opacity="0.75"/><rect x="29.2" y="5.699999999999994" width="5" height="0.8" fill="#999"/><g transform="translate(25.1,33)">
<rect width="39.7" height="20.2" fill="#b09a70"/>
<rect x="0" y="0" width="39.7" height="9" fill="#d9e6ee"/>
<rect x="14" y="0" width="25.7" height="4" fill="#bcd4e4"/>
<rect x="0" y="8" width="39.7" height="4" fill="#c8b890"/>
<rect x="0" y="12" width="39.7" height="8.2" fill="#9a8458"/>
<ellipse cx="11" cy="13" rx="7" ry="7" fill="#8c6c4c"/>
<ellipse cx="11" cy="5.5" rx="2.8" ry="3.2" fill="#c8a888"/>
<ellipse cx="12" cy="18" rx="10" ry="2.6" fill="#6e5038"/>
</g>
<circle cx="69.7" cy="49.8" r="2.2" fill="#f58a3e"/></svg>
<svg class="a" style="left:25.9px;top:292.2px" width="76.5" height="57.8" viewBox="0 0 76.5 57.8"><rect width="76.5" height="57.8" fill="#fff"/><rect x="74.8" y="0" width="1.7" height="57.8" fill="#f4b49c"/><rect x="13.0" y="7.000000000000023" width="50.9" height="1.2" fill="#333"/><rect x="13.0" y="10.500000000000023" width="8" height="1.2" fill="#333"/><rect x="6.800000000000004" y="16.4" width="56.39999999999999" height="1.2" fill="#444"/><rect x="8.10" y="19.10" width="34" height="0.8" fill="#9a9a9a"/><rect x="7.10" y="21.90" width="23" height="0.8" fill="#9a9a9a"/><rect x="9.10" y="24.70" width="22" height="0.8" fill="#9a9a9a"/><rect x="7.10" y="27.20" width="3" height="0.8" fill="#9a9a9a"/><rect x="7.10" y="29.50" width="29" height="0.8" fill="#9a9a9a"/><rect x="10.10" y="31.90" width="12" height="0.8" fill="#9a9a9a"/><rect x="7.10" y="34.70" width="22" height="0.8" fill="#9a9a9a"/><rect x="7.10" y="37.20" width="25" height="0.8" fill="#9a9a9a"/><rect x="38.1" y="36.19999999999999" width="13.3" height="8.4" fill="none" stroke="#bbb" stroke-width="0.5"/><path d="M51.4 40.400000000000034 L60.4 29.19999999999999 M51.4 40.400000000000034 L60.4 36.900000000000034 M51.4 40.400000000000034 L60.4 45.30000000000001" stroke="#bbb" stroke-width="0.5" fill="none"/><rect x="60.4" y="26.70" width="14" height="5" fill="none" stroke="#ccc" stroke-width="0.5"/><rect x="60.4" y="34.40" width="14" height="5" fill="none" stroke="#ccc" stroke-width="0.5"/><rect x="60.4" y="42.80" width="14" height="5" fill="none" stroke="#ccc" stroke-width="0.5"/><rect x="69.1" y="50.80000000000001" width="3" height="1.5" fill="#f0a070"/></svg>
<svg class="a" style="left:27.1px;top:364.2px" width="75.3" height="57.1" viewBox="0 0 75.3 57.1"><rect width="75.3" height="57.1" fill="#fff"/><rect x="73.2" y="0" width="2.1" height="57.1" fill="#f4b49c"/><rect x="16.699999999999996" y="9.599999999999989" width="32.10000000000001" height="1" fill="#555"/><rect x="12.5" y="11.9" width="29.999999999999993" height="1" fill="#555"/><rect x="13.899999999999999" y="14.900000000000011" width="30.700000000000003" height="0.8" fill="#999"/><rect x="3.5" y="20.600000000000023" width="41.1" height="23.69999999999999" fill="#f6ab8a"/><path d="M10.899999999999999 35.80000000000001 L17.9 30.80000000000001 L24.9 34.80000000000001 L17.9 39.80000000000001 Z" fill="#5e8a3a"/><path d="M10.899999999999999 35.80000000000001 L17.9 39.80000000000001 L24.9 34.80000000000001 L24.9 36.80000000000001 L17.9 41.80000000000001 L10.899999999999999 37.80000000000001 Z" fill="#4a3528"/><circle cx="17.4" cy="25.80000000000001" r="2.5" fill="none" stroke="#fde0cc" stroke-width="0.6"/><g transform="translate(37.6,44.60000000000002)"><rect width="29.3" height="11.1" fill="#b4b89c"/><rect width="29.3" height="4" fill="#cdd0c4"/><rect y="7" width="29.3" height="4.1" fill="#9a9c72"/><rect x="13.5" y="3" width="2" height="8" fill="#6a5a62"/><circle cx="14.5" cy="2.8" r="1" fill="#a08070"/></g><circle cx="70.4" cy="49.900000000000034" r="2.2" fill="#f58a3e"/></svg>
<svg class="a" style="left:25.5px;top:435px" width="76.6" height="10" viewBox="0 0 76.6 10"><rect width="76.6" height="10" fill="#fff"/><rect x="75.4" y="0" width="1.2" height="10" fill="#f4b49c"/><rect x="15.5" y="5.8" width="35" height="0.8" fill="#888"/><rect x="13.100000000000001" y="8.1" width="27" height="0.8" fill="#888"/></svg>
<div class="a" style="left:12.60px;top:148.11px;font-family:'Liberation Sans',sans-serif;font-size:8.5px;font-weight:400;color:#d9a096;-webkit-text-stroke:0">1</div>
<div class="a" style="left:12.30px;top:219.21px;font-family:'Liberation Sans',sans-serif;font-size:8.5px;font-weight:400;color:#555;-webkit-text-stroke:0">2</div>
<div class="a" style="left:12.30px;top:289.61px;font-family:'Liberation Sans',sans-serif;font-size:8.5px;font-weight:400;color:#555;-webkit-text-stroke:0">3</div>
<div class="a" style="left:11.70px;top:362.91px;font-family:'Liberation Sans',sans-serif;font-size:8.5px;font-weight:400;color:#555;-webkit-text-stroke:0">4</div>
<div class="a" style="left:11.80px;top:432.21px;font-family:'Liberation Sans',sans-serif;font-size:8.5px;font-weight:400;color:#555;-webkit-text-stroke:0">5</div>
<div class="a" style="left:128px;top:425px;width:654px;height:1px;background:#d2d2d2"></div>
<div class="a" style="left:135.90px;top:429.38px;font-family:'Liberation Sans',sans-serif;font-size:9.6px;font-weight:400;color:#555;transform:scaleX(0.9151);transform-origin:0 0;">Нотатки до слайда</div>
<div class="a" style="left:5px;top:445px;width:787px;height:13px;background:#f0f0f0"></div>
<svg class="a" style="left:0;top:0" width="1004" height="459" viewBox="0 0 1004 459"><rect x="117" y="139.5" width="9.8" height="9" fill="#fff"/><path d="M119.6 146 L121.9 143.4 L124.2 146 Z" fill="#555"/><rect x="117" y="149" width="9.8" height="15" fill="#fff" stroke="#d0d0d0" stroke-width="0.5"/><rect x="117" y="434.5" width="9.8" height="9.2" fill="#fff"/><path d="M119.6 437.8 L124.2 437.8 L121.9 440.4 Z" fill="#555"/><rect x="782" y="140" width="9.6" height="9.5" fill="#fff"/><path d="M784.5 146.5 L786.8 143.9 L789.1 146.5 Z" fill="#555"/><rect x="782" y="149.5" width="9.6" height="11" fill="#fff" stroke="#d0d0d0" stroke-width="0.5"/><rect x="782" y="382.5" width="9.6" height="7" fill="#fff"/><path d="M784.5 385 L789.1 385 L786.8 387.6 Z" fill="#555"/><path d="M784.6 395.5 L786.8 393.4 L789 395.5 M784.6 398 L786.8 395.9 L789 398" fill="none" stroke="#555" stroke-width="0.8"/><path d="M784.6 405 L786.8 407.1 L789 405 M784.6 407.5 L786.8 409.6 L789 407.5" fill="none" stroke="#555" stroke-width="0.8"/><rect x="782" y="427.5" width="9.6" height="8" fill="#fff"/><path d="M784.5 433 L786.8 430.4 L789.1 433 Z" fill="#555"/><rect x="782" y="436" width="9.6" height="7.5" fill="#fff"/><path d="M784.5 438.5 L789.1 438.5 L786.8 441.1 Z" fill="#555"/><path d="M54 447.5 H58.5 V456 H54 Z M58.5 447.5 H61 V452" fill="none" stroke="#666" stroke-width="0.8"/><path d="M59 455 L62.5 450.5" stroke="#666" stroke-width="0.9"/><path d="M563.5 449 L565.3 447.2 L567 449 M565.3 447.5 V452 M562 453.5 H568.5 V455.5 H562 Z" fill="none" stroke="#777" stroke-width="0.7"/><rect x="609.8" y="445.5" width="13.7" height="12.5" fill="#c8c8c8"/><rect x="612.5" y="448" width="8.3" height="7.5" fill="none" stroke="#777" stroke-width="0.7"/><path d="M615 448V455.5" stroke="#777" stroke-width="0.7"/><rect x="629.5" y="447.8" width="3.2" height="3.2" fill="none" stroke="#888" stroke-width="0.6"/><rect x="633.7" y="447.8" width="3.2" height="3.2" fill="none" stroke="#888" stroke-width="0.6"/><rect x="629.5" y="452" width="3.2" height="3.2" fill="none" stroke="#888" stroke-width="0.6"/><rect x="633.7" y="452" width="3.2" height="3.2" fill="none" stroke="#888" stroke-width="0.6"/><path d="M647.5 448 H655.5 V455.5 H647.5 Z M651.5 448 V455.5" fill="none" stroke="#888" stroke-width="0.6"/><path d="M666 448 H674.5 M667 448 V453 H673.5 V448 M670.2 453 V456 M668.5 456 H672" fill="none" stroke="#888" stroke-width="0.6"/><path d="M682 451.7 H685.7" stroke="#555" stroke-width="0.9"/><path d="M688.2 451.7 H749.2" stroke="#b8b8b8" stroke-width="0.6"/><path d="M718.5 449.7 V453.7" stroke="#c8c8c8" stroke-width="0.6"/><rect x="705.6" y="448" width="2.8" height="7.5" fill="#555"/><path d="M751.2 451.7 H756.2 M753.7 449.2 V454.2" stroke="#555" stroke-width="0.9"/><rect x="781.8" y="447.8" width="7.2" height="7.4" fill="none" stroke="#888" stroke-width="0.6"/><path d="M782.5 448.5 L785 451 M788.3 448.5 L786 451 M782.5 454.5 L785 452 M788.3 454.5 L786 452" stroke="#888" stroke-width="0.6"/></svg>
<div class="a" style="left:7.90px;top:447.56px;font-family:'Liberation Sans',sans-serif;font-size:7.2px;font-weight:400;color:#444;transform:scaleX(0.8466);transform-origin:0 0;">Слайд 1 з 83</div>
<div class="a" style="left:69.60px;top:447.06px;font-family:'Liberation Sans',sans-serif;font-size:7.2px;font-weight:400;color:#444;transform:scaleX(0.8478);transform-origin:0 0;">польська</div>
<div class="a" style="left:571.20px;top:447.56px;font-family:'Liberation Sans',sans-serif;font-size:7.2px;font-weight:400;color:#444;transform:scaleX(0.9191);transform-origin:0 0;">Нотатки</div>
<div class="a" style="left:760.40px;top:447.56px;font-family:'Liberation Sans',sans-serif;font-size:7.2px;font-weight:400;color:#444;transform:scaleX(0.9520);transform-origin:0 0;">62%</div>
<svg class="a" style="left:801px;top:211px;overflow:hidden" width="198" height="111" viewBox="0 0 198 111">
<defs>
<filter id="bl" x="-30%" y="-30%" width="160%" height="160%"><feGaussianBlur stdDeviation="5"/></filter>
<filter id="bl2" x="-20%" y="-20%" width="140%" height="140%"><feGaussianBlur stdDeviation="1.4"/></filter>
<filter id="bl1" x="-20%" y="-20%" width="140%" height="140%"><feGaussianBlur stdDeviation="0.6"/></filter>
</defs>
<rect width="198" height="111" fill="#dfdddb"/>
<g filter="url(#bl)">
<rect x="-10" y="-10" width="220" height="40" fill="#ab9480"/>
<ellipse cx="22" cy="14" rx="32" ry="22" fill="#a2876e"/>
<rect x="48" y="-10" width="90" height="20" fill="#4a4858"/>
<rect x="60" y="-6" width="18" height="16" fill="#6a5064"/>
<path d="M100 14 L190 6 L200 26 L110 32 Z" fill="#ad9278"/>
<rect x="185" y="-10" width="30" height="30" fill="#cfc8c0"/>
<rect x="165" y="35" width="40" height="80" fill="#efeeed"/>
<rect x="-10" y="40" width="60" height="75" fill="#dfdddc"/>
<rect x="120" y="40" width="45" height="70" fill="#e4e3e1"/>
</g>
<g filter="url(#bl2)">
<!-- hair back -->
<path d="M42 111 C48 104 54 96 56 86 C59 74 61 60 62 48 C62 30 72 15 90 15 C108 15 117 28 117 46 C118 60 119 74 124 86 C130 98 140 104 150 111 Z" fill="#2d2725"/>
<!-- sweater -->
<path d="M22 111 C26 102 34 94 48 90 L70 86 L108 86 L124 90 C134 96 140 104 144 111 Z" fill="#3b453d"/>
<path d="M62 55 C60 72 56 88 48 100 C46 104 44 108 42 111 L62 111 C66 100 68 90 70 80 Z" fill="#2d2725"/>
<path d="M117 55 C118 72 122 86 130 96 C136 102 144 106 150 111 L124 111 C118 100 112 90 110 80 Z" fill="#2d2725"/>
<!-- face -->
<path d="M65 50 C65 40 74 36 89 36 C104 36 113 40 113 52 C114 66 112 80 104 86 C98 90 80 90 74 86 C66 80 64 64 65 50 Z" fill="#cfae9f"/>
<path d="M76 84 C82 90 98 90 104 84 L104 92 L76 92 Z" fill="#3b453d"/>
<!-- bangs -->
<path d="M62 47 C62 26 74 16 91 16 C108 16 120 26 118 47 C114 43 112 41 108 44 C104 40 100 42 96 45 C92 41 86 42 82 44 C78 42 72 42 68 46 C66 46 64 46 62 47 Z" fill="#2d2725"/>
</g>
<g filter="url(#bl1)">
<!-- glasses -->
<path d="M64.5 47.5 C72 46.5 80 46.5 87 48 C87.5 54 86 61 78 62.5 C70 63 66 57 64.5 47.5 Z" fill="#6a5856" fill-opacity="0.35" stroke="#2a2220" stroke-width="1.8"/>
<path d="M92 48 C99 46.5 106 46 113 46.5 C112 56 108 62 100 62.5 C93 62 91.5 56 92 48 Z" fill="#6a5856" fill-opacity="0.35" stroke="#2a2220" stroke-width="1.8"/>
<path d="M87 49.5 Q89.5 48.5 92 49.5" stroke="#2a2220" stroke-width="1.4" fill="none"/>
<path d="M86 64 Q89 70 92 64" stroke="#b08e80" stroke-width="0.8" fill="none"/>
<path d="M83 77 Q89 76 95 77" stroke="#8e6a5e" stroke-width="1.1" fill="none"/>
</g>
<path d="M5 95.5 H95 V108.5 H5 A2.5 2.5 0 0 1 2.5 106 V98 A2.5 2.5 0 0 1 5 95.5 Z" fill="#222" fill-opacity="0.5"/>
<g fill="#fff"><rect x="5.5" y="104" width="1.6" height="3"/><rect x="8.2" y="102" width="1.6" height="5"/><rect x="10.9" y="100" width="1.6" height="7"/><rect x="13.6" y="98" width="1.6" height="9"/></g>
</svg>
<div class="a" style="left:821.00px;top:308.95px;font-family:'Liberation Sans',sans-serif;font-size:8.6px;font-weight:400;color:#fff;transform:scaleX(1.1133);transform-origin:0 0;">Олена Лазарєва</div>
</body></html>
